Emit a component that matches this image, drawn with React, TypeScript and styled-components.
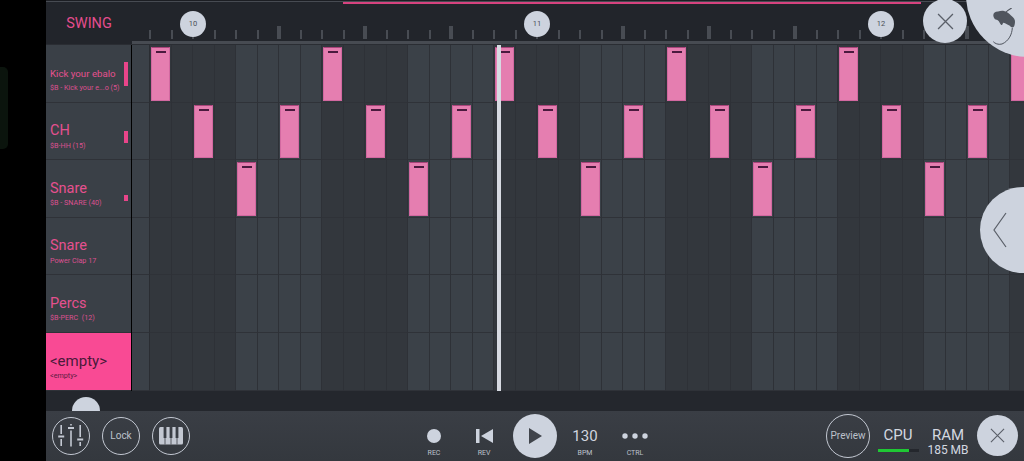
import React from 'react';
import styled, { createGlobalStyle } from 'styled-components';

const STEP_COUNT = 41;
const STEPS = Array.from({ length: STEP_COUNT }, (_, i) => i);
const BAR_LABELS: { [step: number]: string } = { 2: '10', 18: '11', 34: '12' };
const COLUMNS = `18px repeat(${STEP_COUNT}, 21.5px)`;

type Track = {
  name: string;
  sample: string;
  nameSize: number;
  meter: number;
  active?: boolean;
  hasNote: (step: number) => boolean;
};

const TRACKS: Track[] = [
  { name: 'Kick your ebalo', sample: '$B - Kick your e...o (5)', nameSize: 9.7, meter: 24, hasNote: (s) => s % 8 === 0 },
  { name: 'CH', sample: '$B-HH (15)', nameSize: 14.5, meter: 12, hasNote: (s) => s % 4 === 2 },
  { name: 'Snare', sample: '$B - SNARE (40)', nameSize: 14.5, meter: 6, hasNote: (s) => s % 8 === 4 },
  { name: 'Snare', sample: 'Power Clap 17', nameSize: 14.5, meter: 0, hasNote: () => false },
  { name: 'Percs', sample: '$B-PERC  (12)', nameSize: 14.5, meter: 0, hasNote: () => false },
  { name: '<empty>', sample: '<empty>', nameSize: 15, meter: 0, active: true, hasNote: () => false },
];

const GlobalStyle = createGlobalStyle`
  html, body {
    margin: 0;
    background: #000;
    overflow: hidden;
  }
  * {
    box-sizing: border-box;
  }
`;

const Screen = styled.div`
  position: relative;
  display: flex;
  width: 1024px;
  height: 461px;
  overflow: hidden;
  font-family: Roboto, "Liberation Sans", sans-serif;
  background: #000;
`;

const Gutter = styled.div`
  width: 46px;
  flex: none;
  padding-top: 67px;
`;

const GestureTab = styled.div`
  width: 8px;
  height: 82px;
  background: #0b140d;
  border-radius: 0 5px 5px 0;
`;

const Main = styled.div`
  position: relative;
  flex: 1;
  min-width: 0;
  display: flex;
  flex-direction: column;
`;

const TopBar = styled.div`
  height: 45px;
  flex: none;
  background: #22252b;
  border-top: 1px solid #1c1e23;
  border-bottom: 1px solid #2a2d33;
`;

const SongLine = styled.div`
  height: 4px;
  padding-left: 297px;
  border-top: 1px solid #474b52;
`;

const SongProgress = styled.div`
  width: 578px;
  height: 2px;
  background: #d6437f;
`;

const RulerRow = styled.div`
  display: flex;
`;

const SwingLabel = styled.div`
  width: 86px;
  flex: none;
  text-align: center;
  font-size: 14.5px;
  line-height: 38px;
  color: #e54d8e;
`;

const Ruler = styled.div`
  flex: 1;
  min-width: 0;
  overflow: hidden;
`;

const TickGrid = styled.div`
  display: grid;
  grid-template-columns: ${COLUMNS};
  height: 34px;
`;

const TickCell = styled.div`
  position: relative;
  display: flex;
  align-items: flex-end;
`;

const Tick = styled.div<{ $major?: boolean }>`
  width: ${(p) => (p.$major ? 4 : 2)}px;
  height: ${(p) => (p.$major ? 13 : 9)}px;
  margin-left: ${(p) => (p.$major ? -2 : -1)}px;
  background: #484c53;
`;

const BarBubble = styled.div`
  position: absolute;
  left: -13px;
  top: 6px;
  width: 26px;
  height: 26px;
  border-radius: 50%;
  background: #cdd3de;
  color: #4b4f57;
  font-size: 7.5px;
  line-height: 26px;
  text-align: center;
`;

const RulerBase = styled.div`
  height: 3px;
  margin-top: 2px;
  background: #474b52;
`;

const TrackList = styled.div`
  flex: none;
`;

const TrackRow = styled.div`
  display: flex;
  height: 57.6px;
`;

const TrackLabel = styled.div<{ $active?: boolean }>`
  display: flex;
  width: 85px;
  flex: none;
  margin-right: 1px;
  padding-left: 4px;
  background: ${(p) => (p.$active ? '#f94a94' : '#3a4047')};
  border-bottom: 1px solid #2f3238;
`;

const TrackText = styled.div`
  flex: 1;
  min-width: 0;
  padding-top: 19px;
  display: flex;
  flex-direction: column;
`;

const TrackName = styled.div<{ $size: number; $active?: boolean }>`
  height: 18px;
  display: flex;
  align-items: center;
  font-size: ${(p) => p.$size}px;
  white-space: nowrap;
  color: ${(p) => (p.$active ? '#4a1a3a' : '#e5508f')};
`;

const TrackSample = styled.div<{ $active?: boolean }>`
  margin-top: 1px;
  font-size: 7.2px;
  line-height: 9px;
  white-space: pre;
  color: ${(p) => (p.$active ? '#5a1c42' : '#dc5090')};
`;

const Meter = styled.div<{ $height: number }>`
  align-self: flex-end;
  width: 4px;
  height: ${(p) => p.$height}px;
  margin: 0 3px 16px 0;
  background: #e8458a;
`;

const StepGrid = styled.div`
  flex: 1;
  min-width: 0;
  display: grid;
  grid-template-columns: ${COLUMNS};
  overflow: hidden;
`;

const StepCell = styled.div<{ $dark: boolean }>`
  min-width: 0;
  padding: 2px 0 1px 1px;
  background: ${(p) => (p.$dark ? '#33373d' : '#3b4148')};
  border-right: 1px solid #2e3137;
  border-bottom: 1px solid #2f3238;
`;

const LeadCell = styled(StepCell)`
  border-right-color: #2a2d32;
`;

const Note = styled.div`
  width: 19px;
  height: 100%;
  padding-top: 3px;
  background: #e57eb0;
  border: 1px solid #d268a0;
  border-top-color: #a8447a;
`;

const NoteHandle = styled.div`
  width: 10px;
  height: 2px;
  margin: 0 auto;
  background: #4a1a3e;
`;

const Playhead = styled.div`
  position: absolute;
  left: 451px;
  top: 45px;
  width: 4px;
  height: 346px;
  background: #d7dae2;
`;

const ScrollStrip = styled.div`
  height: 20px;
  flex: none;
  padding: 6px 0 0 26px;
  background: #24272d;
`;

const ScrollThumb = styled.div`
  width: 28px;
  height: 14px;
  border-radius: 14px 14px 0 0;
  background: #cdd3de;
`;

const BottomBar = styled.div`
  flex: 1;
  display: flex;
  padding: 0 6px;
  background: linear-gradient(#3a3e45, #34383e);
`;

const ButtonGroup = styled.div`
  display: flex;
  align-items: center;
  gap: 12px;
`;

const RoundButton = styled.div<{ $size?: number }>`
  display: flex;
  align-items: center;
  justify-content: center;
  flex: none;
  width: ${(p) => p.$size ?? 38}px;
  height: ${(p) => p.$size ?? 38}px;
  border: 1.5px solid #c3c8d2;
  border-radius: 50%;
  color: #bcc1cb;
  font-size: 10px;
`;

const Transport = styled.div`
  display: flex;
  margin-left: 219px;
`;

const TransportItem = styled.div`
  width: 50px;
  padding-top: 13px;
  display: flex;
  flex-direction: column;
  align-items: center;
`;

const TransportIcon = styled.div`
  height: 24px;
  display: flex;
  align-items: center;
  justify-content: center;
  color: #d0d5df;
  font-size: 15px;
`;

const TransportLabel = styled.div`
  font-size: 7px;
  line-height: 10px;
  color: #bcc1cb;
`;

const RecDot = styled.div`
  width: 14px;
  height: 14px;
  border-radius: 50%;
  background: #cdd3de;
`;

const PlayButton = styled.div`
  display: flex;
  align-items: center;
  justify-content: center;
  width: 44px;
  height: 44px;
  margin: 3px 3px 0 4px;
  border-radius: 50%;
  background: #cdd3de;
`;

const RightGroup = styled.div`
  display: flex;
  align-items: center;
  margin-left: auto;
`;

const PreviewGap = styled.div`
  width: 3px;
  flex: none;
`;

const Stat = styled.div`
  width: 50px;
  align-self: flex-start;
  margin-top: 14px;
  display: flex;
  flex-direction: column;
  align-items: center;
  color: #d3d8e0;
  font-size: 15px;
  line-height: 20px;
`;

const StatValue = styled.div`
  font-size: 12px;
  line-height: 12px;
  margin-top: -1px;
`;

const CpuBar = styled.div`
  width: 41px;
  height: 3px;
  margin-top: 4px;
  background: #24272d;
`;

const CpuFill = styled.div`
  height: 100%;
  background: #1fc834;
`;

const CloseDisc = styled.div<{ $size: number }>`
  display: flex;
  align-items: center;
  justify-content: center;
  flex: none;
  width: ${(p) => p.$size}px;
  height: ${(p) => p.$size}px;
  border-radius: 50%;
  background: #cdd3de;
`;

const BottomClose = styled(CloseDisc)`
  margin-left: 4px;
`;

const TopClose = styled(CloseDisc)`
  position: absolute;
  left: 923px;
  top: -1px;
`;

const LogoDisc = styled.div`
  position: absolute;
  left: 966px;
  top: -67px;
  width: 124px;
  height: 124px;
  border-radius: 50%;
  background: #cdd3de;
`;

const LogoMark = styled.svg`
  position: absolute;
  left: 25px;
  top: 75px;
`;

const DrawerHandle = styled.div`
  position: absolute;
  left: 980px;
  top: 187px;
  display: flex;
  align-items: center;
  width: 86px;
  height: 86px;
  padding-left: 13px;
  border-radius: 50%;
  background: #cdd3de;
`;

const CrossIcon = ({ size }: { size: number }) => (
  <svg width={size} height={size} viewBox="0 0 16 16">
    <path d="M1 1L15 15M15 1L1 15" stroke="#5a5f68" strokeWidth={1.2} fill="none" />
  </svg>
);

const MixerIcon = () => (
  <svg width="26" height="24" viewBox="0 0 26 24" fill="#c3c8d2">
    <rect x="2.4" y="1" width="1.6" height="9" />
    <rect x="0.2" y="11.5" width="6" height="2" />
    <rect x="2.4" y="15" width="1.6" height="7" />
    <rect x="12.2" y="0" width="1.6" height="1.5" />
    <rect x="10" y="3" width="6" height="2" />
    <rect x="12.2" y="6.5" width="1.6" height="16" />
    <rect x="21.4" y="1" width="1.6" height="12" />
    <rect x="19.2" y="14.5" width="6" height="2" />
    <rect x="21.4" y="18" width="1.6" height="4" />
  </svg>
);

const PianoIcon = () => (
  <svg width="24" height="18" viewBox="0 0 24 18">
    <rect x="0" y="0" width="24" height="17.5" rx="1.5" fill="#c3c8d2" />
    <path d="M6 11V17.5M12 11V17.5M18 11V17.5" stroke="#3a3e45" strokeWidth="0.8" />
    <path d="M4.6 0H7.4V11H4.6ZM10.6 0H13.4V11H10.6ZM16.6 0H19.4V11H16.6Z" fill="#3a3e45" />
  </svg>
);

const FruitLogo = () => (
  <LogoMark width="28" height="40" viewBox="0 0 28 40" fill="none">
    <path
      d="M2.3 7C2.6 4.6 4 3.7 7 3.4C9 3.1 11 2.4 13 3C16 4 18 5.4 20 7.5C22.5 9.5 24.3 11.5 24 14C23.8 17 23 19.5 21.7 19.5C20 19.5 19 17.5 17.3 17C15.5 16 13.5 14.7 12.3 14.7C11.5 15.5 11.5 17 10.7 17C9.5 17 8.8 14 7.3 12.7C6 11.8 5 11.5 4 11.3C3 10 2.2 8.5 2.3 7Z"
      fill="#50555e"
    />
    <path d="M14 5C15.5 3 18 1.5 20.7 0" stroke="#50555e" strokeWidth="1.1" />
    <path d="M21.3 20C21 26 18 33 11 36C7 37 4 35.5 2.3 33.7" stroke="#50555e" strokeWidth="1" />
  </LogoMark>
);

const App = () => {
  return (
    <Screen>
      <GlobalStyle />
      <Gutter>
        <GestureTab />
      </Gutter>
      <Main>
        <TopBar>
          <SongLine>
            <SongProgress />
          </SongLine>
          <RulerRow>
            <SwingLabel>SWING</SwingLabel>
            <Ruler>
              <TickGrid>
                <TickCell />
                {STEPS.map((step) => (
                  <TickCell key={`tick-${step}`}>
                    <Tick $major={step % 4 === 2 && !BAR_LABELS[step]} />
                    {BAR_LABELS[step] && <BarBubble>{BAR_LABELS[step]}</BarBubble>}
                  </TickCell>
                ))}
              </TickGrid>
              <RulerBase />
            </Ruler>
          </RulerRow>
        </TopBar>

        <TrackList>
          {TRACKS.map((track, row) => (
            <TrackRow key={`track-${row}`}>
              <TrackLabel $active={track.active}>
                <TrackText>
                  <TrackName $size={track.nameSize} $active={track.active}>{track.name}</TrackName>
                  <TrackSample $active={track.active}>{track.sample}</TrackSample>
                </TrackText>
                {track.meter > 0 && <Meter $height={track.meter} />}
              </TrackLabel>
              <StepGrid>
                <LeadCell $dark={false} />
                {STEPS.map((step) => (
                  <StepCell key={`cell-${row}-${step}`} $dark={Math.floor(step / 4) % 2 === 0}>
                    {track.hasNote(step) && (
                      <Note>
                        <NoteHandle />
                      </Note>
                    )}
                  </StepCell>
                ))}
              </StepGrid>
            </TrackRow>
          ))}
        </TrackList>

        <ScrollStrip>
          <ScrollThumb />
        </ScrollStrip>

        <BottomBar>
          <ButtonGroup>
            <RoundButton><MixerIcon /></RoundButton>
            <RoundButton>Lock</RoundButton>
            <RoundButton><PianoIcon /></RoundButton>
          </ButtonGroup>

          <Transport>
            <TransportItem>
              <TransportIcon><RecDot /></TransportIcon>
              <TransportLabel>REC</TransportLabel>
            </TransportItem>
            <TransportItem>
              <TransportIcon>
                <svg width="17" height="14" viewBox="0 0 17 14" fill="#cdd3de">
                  <rect x="0" y="0" width="3.5" height="14" />
                  <path d="M17 0V14L5 7Z" />
                </svg>
              </TransportIcon>
              <TransportLabel>REV</TransportLabel>
            </TransportItem>
            <PlayButton>
              <svg width="14" height="16" viewBox="0 0 14 16" fill="#40444b">
                <path d="M1 0L14 8L1 16Z" />
              </svg>
            </PlayButton>
            <TransportItem>
              <TransportIcon>130</TransportIcon>
              <TransportLabel>BPM</TransportLabel>
            </TransportItem>
            <TransportItem>
              <TransportIcon>
                <svg width="26" height="6" viewBox="0 0 26 6" fill="#cdd3de">
                  <circle cx="3" cy="3" r="2.7" />
                  <circle cx="13" cy="3" r="2.7" />
                  <circle cx="23" cy="3" r="2.7" />
                </svg>
              </TransportIcon>
              <TransportLabel>CTRL</TransportLabel>
            </TransportItem>
          </Transport>

          <RightGroup>
            <RoundButton $size={44}>Preview</RoundButton>
            <PreviewGap />
            <Stat>
              CPU
              <CpuBar>
                <CpuFill style={{ width: '78%' }} />
              </CpuBar>
            </Stat>
            <Stat>
              RAM
              <StatValue>185 MB</StatValue>
            </Stat>
            <BottomClose $size={41}><CrossIcon size={15} /></BottomClose>
          </RightGroup>
        </BottomBar>

        <Playhead />
      </Main>

      <LogoDisc>
        <FruitLogo />
      </LogoDisc>
      <TopClose $size={44}>
        <CrossIcon size={17} />
      </TopClose>
      <DrawerHandle>
        <svg width="14" height="36" viewBox="0 0 14 36" fill="none">
          <path d="M13 1L1 18L13 35" stroke="#5a5f68" strokeWidth="1.2" />
        </svg>
      </DrawerHandle>
    </Screen>
  );
};

export default App;
